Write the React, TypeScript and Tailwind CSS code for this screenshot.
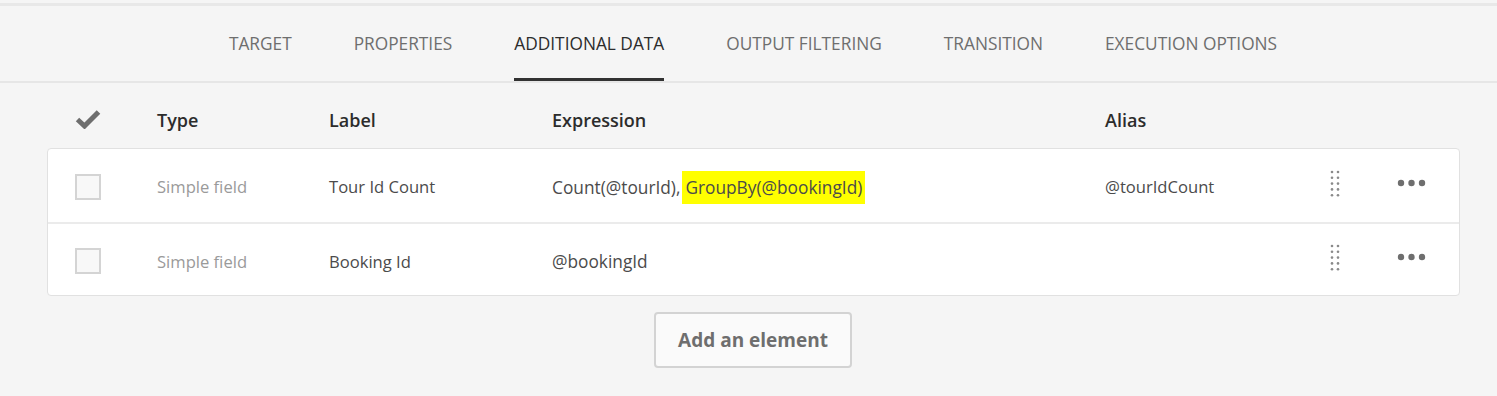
import React from "react";

const tabs = ["TARGET", "PROPERTIES", "ADDITIONAL DATA", "OUTPUT FILTERING", "TRANSITION", "EXECUTION OPTIONS"];

const cols = "grid grid-cols-[82px_172px_223px_553px_224px_68px_1fr] items-center pl-[27px]";

function DragHandle() {
  return (
    <svg width="10" height="28" viewBox="0 0 10 28" className="block">
      {[0, 1, 2, 3, 4].map((r) =>
        [0, 1].map((c) => (
          <circle key={`${r}-${c}`} cx={2 + c * 6} cy={2 + r * 5.8} r="1.3" fill="#8a8a8a" />
        ))
      )}
    </svg>
  );
}

function More() {
  return (
    <svg width="30" height="8" viewBox="0 0 30 8" className="block">
      <circle cx="4" cy="4" r="3.2" fill="#6e6e6e" />
      <circle cx="14.5" cy="4" r="3.2" fill="#6e6e6e" />
      <circle cx="25" cy="4" r="3.2" fill="#6e6e6e" />
    </svg>
  );
}

function Row({ label, expr, alias, cls }: { label: string; expr: React.ReactNode; alias: string; cls: string }) {
  return (
    <div className={`${cols} ${cls} text-[16.6px]`}>
      <div className="w-[26px] h-[26px] border-2 border-[#d4d4d4] bg-[#f8f8f8]" />
      <div className="text-[#9a9a9a] pt-[2px]">Simple field</div>
      <div className="text-[#4b4b4b] pt-[2px]">{label}</div>
      <div className="text-[#4b4b4b] pt-[2px] text-[17.3px]">{expr}</div>
      <div className="text-[#4b4b4b] pt-[2px]">{alias}</div>
      <div className="pl-[1px] -mt-[6px]"><DragHandle /></div>
      <div className="-mt-[8px]"><More /></div>
    </div>
  );
}

export default function App() {
  return (
    <div className="w-[1497px] h-[396px] bg-[#f5f5f5] overflow-hidden text-[16px]" style={{ fontFamily: '"Open Sans", "Noto Sans", sans-serif' }}>
      <div className="h-[3px]" />
      <div className="h-[3px] bg-[#e8e8e8]" />
      <div className="h-[77px] border-b-2 border-[#e6e6e6] flex justify-center pl-[9px] gap-[62px]">
        {tabs.map((t) => (
          <div
            key={t}
            className={`h-full flex items-center pt-[4px] text-[17.3px] border-b-[3px] -mb-[2px] ${
              t === "ADDITIONAL DATA" ? "text-[#2c2c2c] border-[#323232]" : "text-[#6e6e6e] border-transparent"
            }`}
          >
            {t}
          </div>
        ))}
      </div>
      <div className="px-[47px]">
        <div className={`${cols} h-[65px] pl-[28px] pt-[9px] font-semibold text-[18px] text-[#2c2c2c]`}>
          <svg width="26" height="20" viewBox="0 0 26 20" className="block -mt-[3px]">
            <path d="M2.5 10.5 L9.5 17 L23.5 3" fill="none" stroke="#6e6e6e" strokeWidth="5" strokeLinejoin="miter" />
          </svg>
          <div>Type</div>
          <div>Label</div>
          <div>Expression</div>
          <div>Alias</div>
          <div />
          <div />
        </div>
        <div className="bg-white border border-[#e1e1e1] rounded-[4px] w-[1413px]">
          <Row
            cls="h-[75px] pt-[2px] border-b-2 border-[#ebebeb]"
            label="Tour Id Count"
            expr={
              <span>
                Count(@tourId),<span className="bg-[#ffff00] px-[3px] py-[5px] ml-[2px]">GroupBy(@bookingId)</span>
              </span>
            }
            alias="@tourIdCount"
          />
          <Row cls="h-[71px] pt-[3px]" label="Booking Id" expr="@bookingId" alias="" />
        </div>
        <div className="flex justify-center mt-[16px] pl-[9px]">
          <button className="w-[198px] h-[56px] border-2 border-[#d3d3d3] rounded-[4px] bg-[#fafafa] text-[#6e6e6e] font-bold text-[19px]">
            Add an element
          </button>
        </div>
      </div>
    </div>
  );
}
